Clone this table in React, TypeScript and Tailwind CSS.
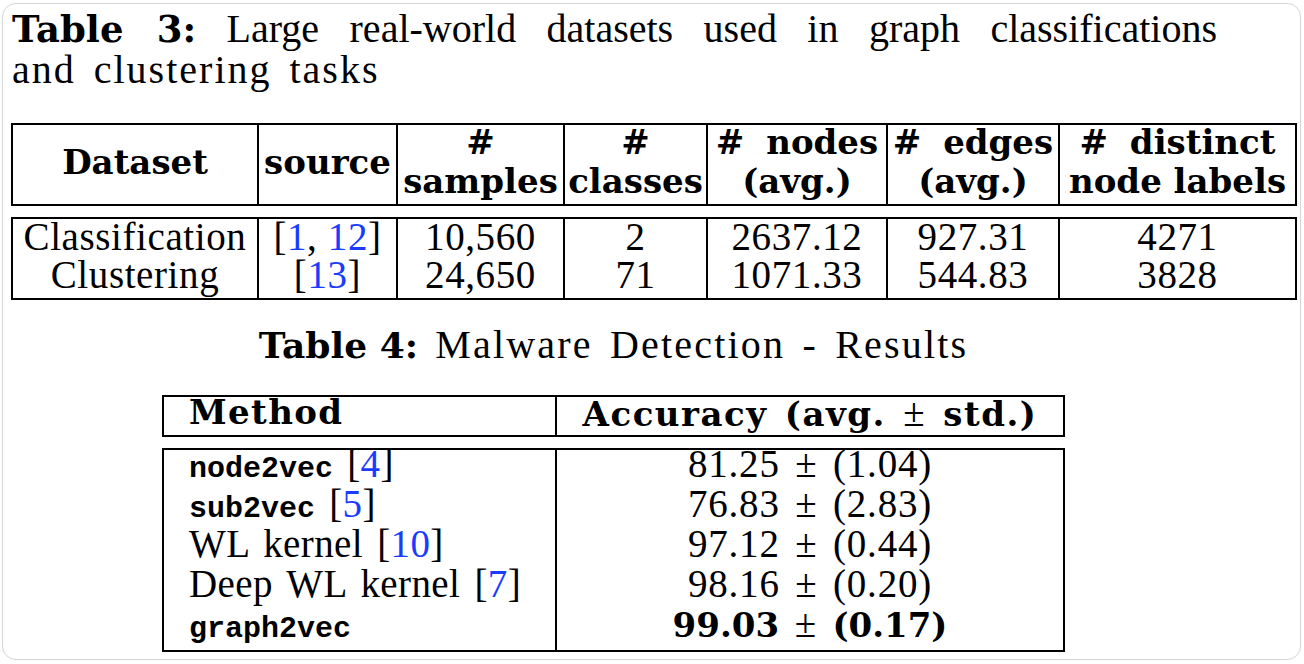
import React from "react";

const serif = "font-['Liberation_Serif',serif]";
const bold = "font-['DejaVu_Serif',serif] font-bold";
const mono = "font-['Liberation_Mono',monospace] font-bold text-[30px] leading-[26px] tracking-normal";
const blue = "text-[#1a3cff]";

function Cite({ refs }: { refs: string[] }) {
  return (
    <span>
      [
      {refs.map((r, i) => (
        <span key={r}>
          {i > 0 && ", "}
          <span className={blue}>{r}</span>
        </span>
      ))}
      ]
    </span>
  );
}

const t3Head: string[][] = [
  ["Dataset"],
  ["source"],
  ["#", "samples"],
  ["#", "classes"],
  ["# nodes", "(avg.)"],
  ["# edges", "(avg.)"],
  ["# distinct", "node labels"],
];

const t3Body: React.ReactNode[][] = [
  ["Classification", "Clustering"],
  [<Cite key="a" refs={["1", "12"]} />, <Cite key="b" refs={["13"]} />],
  ["10,560", "24,650"],
  ["2", "71"],
  ["2637.12", "1071.33"],
  ["927.31", "544.83"],
  ["4271", "3828"],
];

const t3Cols = "grid grid-cols-[244px_139px_167px_143px_180px_172px_237px]";

const t4Rows: { method: React.ReactNode; acc: string; best?: boolean }[] = [
  { method: <><span className={mono}>node2vec</span> <Cite refs={["4"]} /></>, acc: "81.25 ± (1.04)" },
  { method: <><span className={mono}>sub2vec</span> <Cite refs={["5"]} /></>, acc: "76.83 ± (2.83)" },
  { method: <>WL kernel <Cite refs={["10"]} /></>, acc: "97.12 ± (0.44)" },
  { method: <>Deep WL kernel <Cite refs={["7"]} /></>, acc: "98.16 ± (0.20)" },
  { method: <span className={mono}>graph2vec</span>, acc: "99.03 ± (0.17)", best: true },
];

function Table3() {
  return (
    <div className="-ml-px flex flex-col">
      <div className={`${t3Cols} h-[83px] w-[1286px] border-2 border-black`}>
        {t3Head.map((h, i) => (
          <div key={i} className={i > 0 ? "border-l-2 border-black" : ""}>
            <div
              className={`flex flex-col items-center ${bold} text-[34px] leading-[39px] ${h.length === 1 ? "pt-[18px]" : "-mt-[2px]"}`}
            >
              {h.map((line) => (
                <span key={line} className={`whitespace-nowrap ${i >= 4 && line.startsWith("#") ? "[word-spacing:10px]" : ""}`}>
                  {line}
                </span>
              ))}
            </div>
          </div>
        ))}
      </div>
      <div className={`${t3Cols} mt-[11px] h-[83px] w-[1286px] border-2 border-black`}>
        {t3Body.map((col, i) => (
          <div key={i} className={i > 0 ? "border-l-2 border-black" : ""}>
            <div className={`-mt-[1px] flex flex-col items-center ${serif} text-[39px] leading-[38px] tracking-[0.6px]`}>
              {col.map((v, j) => (
                <span key={j} className="whitespace-nowrap">
                  {v}
                </span>
              ))}
            </div>
          </div>
        ))}
      </div>
    </div>
  );
}

function Table4() {
  return (
    <div className="ml-[150px] flex w-[903px] flex-col">
      <div className={`mt-[24px] text-center ${serif} text-[40px] leading-[41px] tracking-[2.2px] [word-spacing:5px]`}>
        <span className={`${bold} text-[36px] leading-none tracking-normal [word-spacing:0px]`}>Table 4:</span>
        {"  "}Malware Detection - Results
      </div>
      <div className="mt-[30px] grid h-[42px] grid-cols-[391px_508px] grid-rows-[38px] border-2 border-black">
        <div>
          <div className={`-mt-[4px] pl-[25px] ${bold} text-[34px] leading-[38px] tracking-[1.4px]`}>Method</div>
        </div>
        <div className="border-l-2 border-black">
          <div className={`-mt-[4px] text-center ${bold} text-[34px] leading-[38px] tracking-[1.5px] [word-spacing:4px]`}>
            Accuracy (avg. <span className={`${serif} text-[39px] font-normal leading-none`}>±</span> std.)
          </div>
        </div>
      </div>
      <div className="mt-[11px] grid h-[204px] grid-cols-[391px_508px] grid-rows-[200px] border-2 border-black">
        <div>
          <div className={`-mt-[6px] flex flex-col pl-[25px] ${serif} text-[39px] leading-[40px] tracking-[0.4px] [word-spacing:4px]`}>
            {t4Rows.map((r, i) => (
              <div key={i} className="h-[40px] whitespace-nowrap">
                {r.method}
              </div>
            ))}
          </div>
        </div>
        <div className="border-l-2 border-black">
          <div className={`-mt-[6px] flex flex-col items-center ${serif} text-[39px] leading-[40px] tracking-[0.8px] [word-spacing:5px]`}>
            {t4Rows.map((r, i) =>
              r.best ? (
                <div key={i} className="h-[40px] whitespace-nowrap">
                  <span className={`${bold} text-[34px] leading-none tracking-normal`}>99.03</span> ±{" "}
                  <span className={`${bold} text-[34px] leading-none tracking-normal`}>(0.17)</span>
                </div>
              ) : (
                <div key={i} className="h-[40px] whitespace-nowrap">
                  {r.acc}
                </div>
              )
            )}
          </div>
        </div>
      </div>
    </div>
  );
}

export default function App() {
  return (
    <div className="h-[664px] w-[1304px] bg-white pl-[2px] pt-[3px] text-black">
      <div className="flex h-[657px] w-[1299px] flex-col rounded-[14px] border border-[#d6d6d6] pl-[9px] pt-[4px] shadow-[0_0_2px_rgba(0,0,0,0.06)]">
        <div className={`${serif} text-[40px] leading-[41px]`}>
          <div className="w-[1205px] text-justify [text-align-last:justify]">
            <span className={`${bold} text-[37px] leading-none`}>Table 3:</span> Large real-world datasets used in graph classifications
          </div>
          <div className="tracking-[2px] [word-spacing:6px]">and clustering tasks</div>
        </div>
        <div className="mt-[33px]">
          <Table3 />
        </div>
        <Table4 />
      </div>
    </div>
  );
}
